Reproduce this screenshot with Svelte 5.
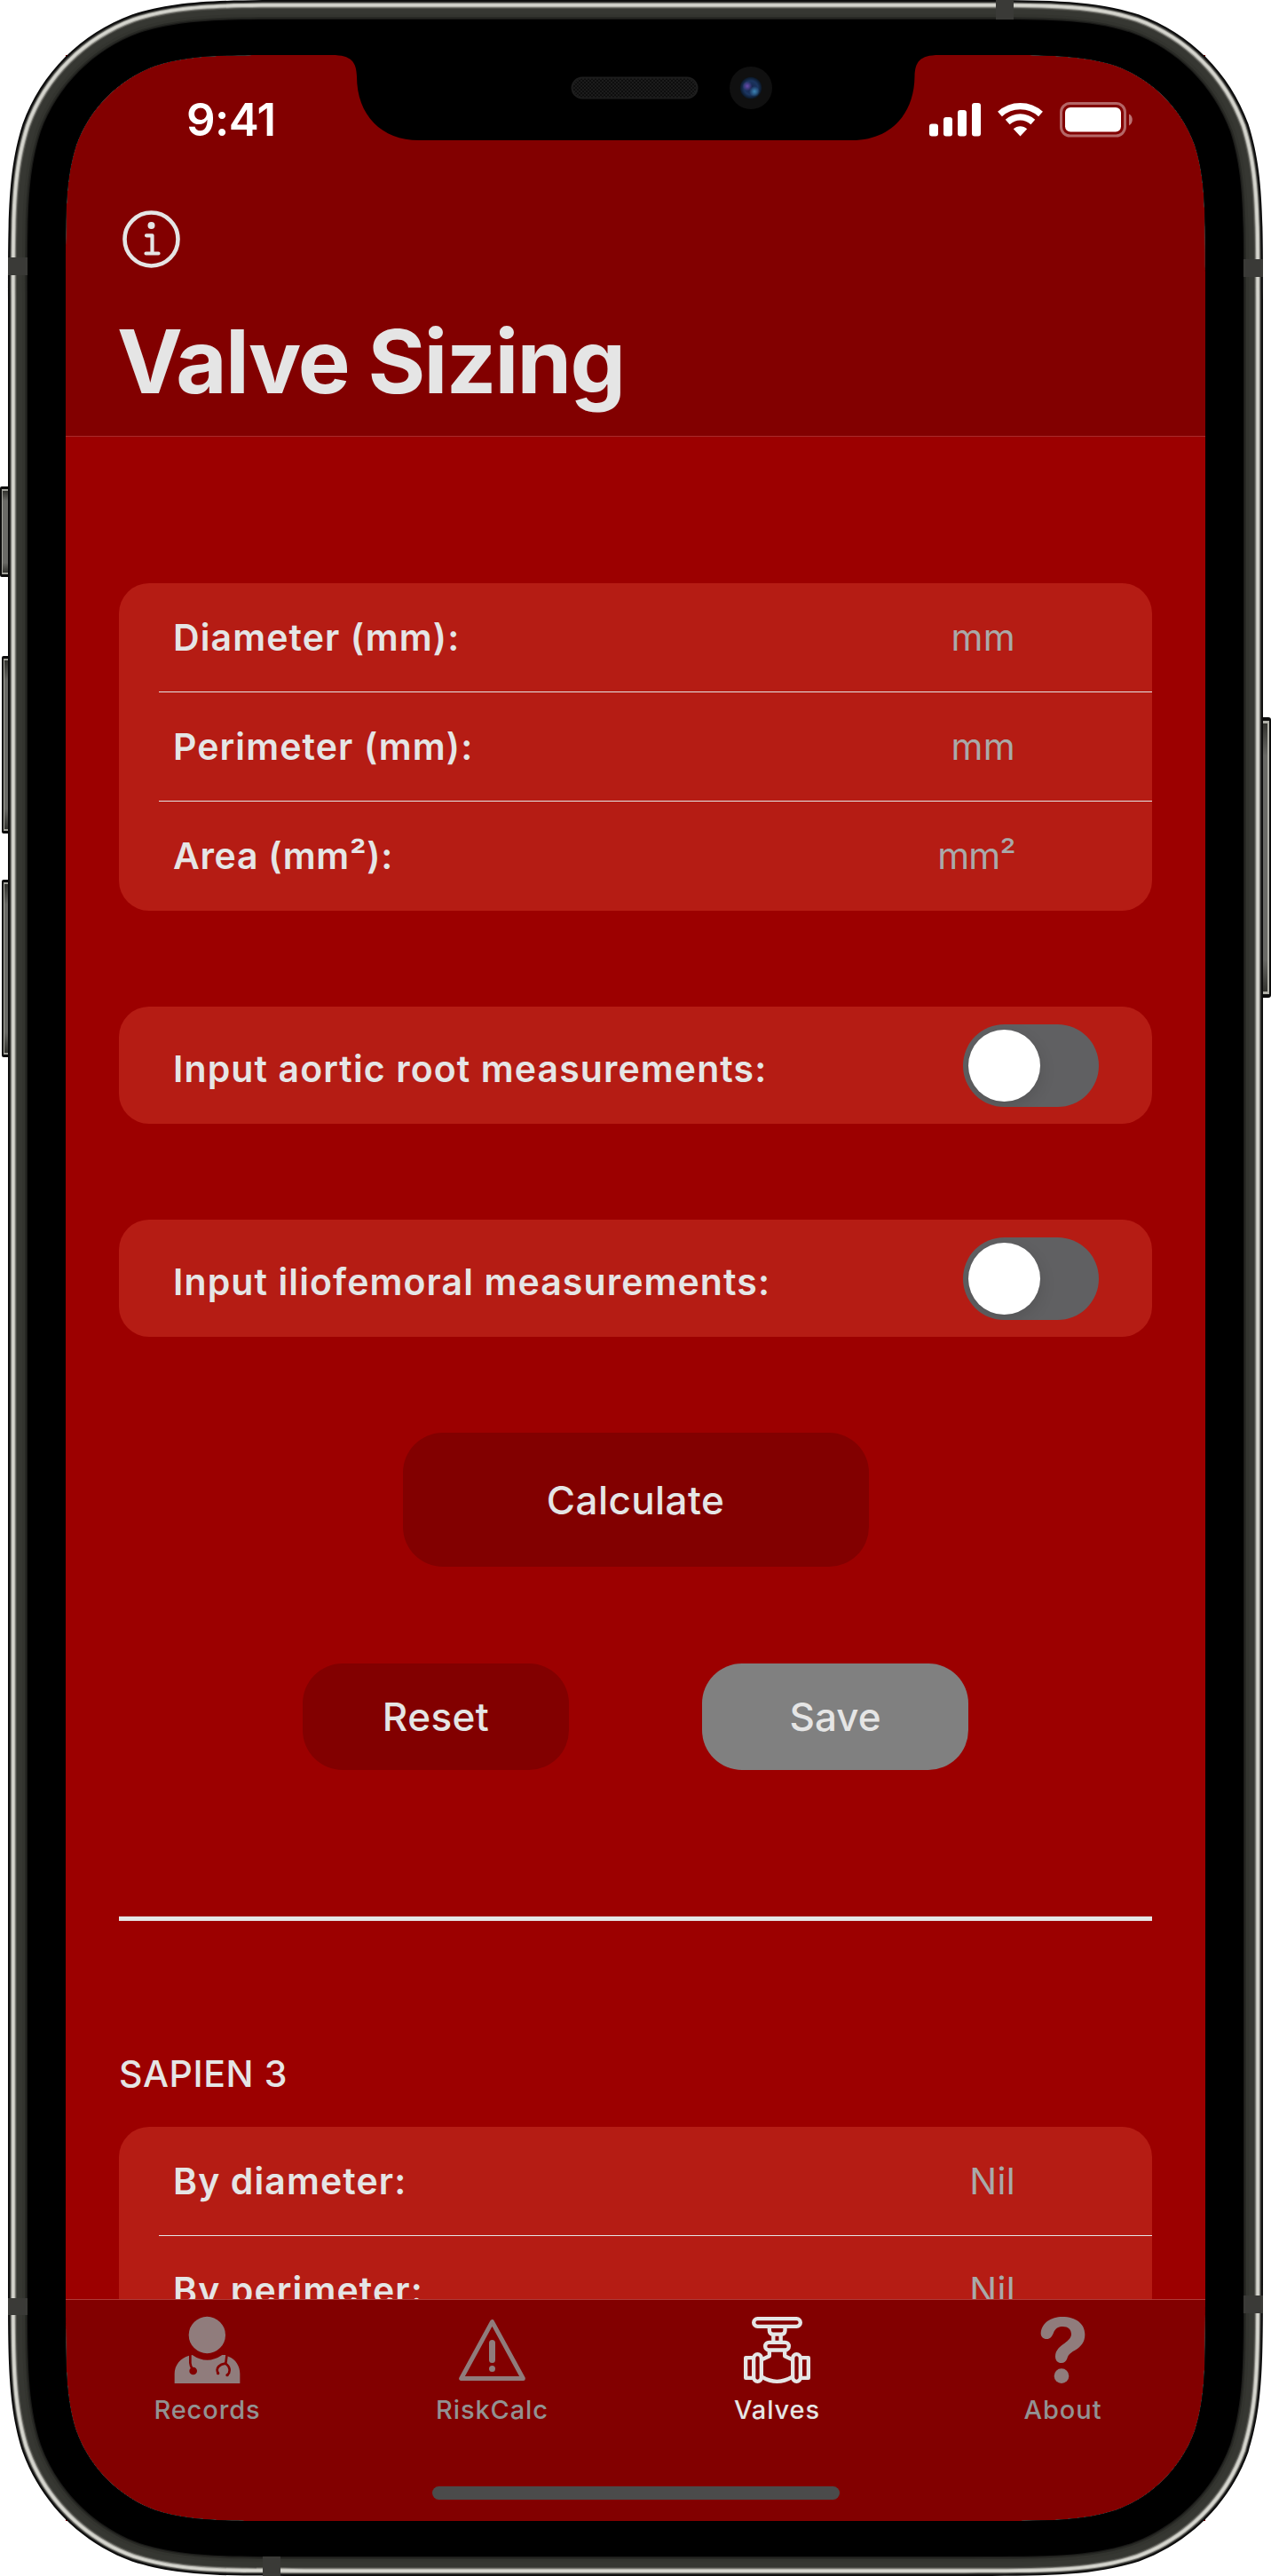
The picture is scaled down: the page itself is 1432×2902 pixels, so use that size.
<script>
  const measurements = [
    { label: 'Diameter (mm):', unit: 'mm' },
    { label: 'Perimeter (mm):', unit: 'mm' },
    { label: 'Area (mm²):', unit: 'mm²', squared: true },
  ];
  const results = [
    { label: 'By diameter:', value: 'Nil' },
    { label: 'By perimeter:', value: 'Nil' },
  ];

  let toggles = $state([
    { label: 'Input aortic root measurements:', on: false },
    { label: 'Input iliofemoral measurements:', on: false },
  ]);

  const tabs = [
    { name: 'Records', icon: 'doctor' },
    { name: 'RiskCalc', icon: 'warning' },
    { name: 'Valves', icon: 'valve' },
    { name: 'About', icon: 'question' },
  ];
  let active = $state('Valves');

  // Rounded rectangle with continuous-curvature corners.
  function squircle(x0, y0, x1, y1, r) {
    const a = 1.52866483 * r, b = 1.08849296 * r, c = 0.86840694 * r, d = 0.63149379 * r;
    const e = 0.37282383 * r, f = 0.16905956 * r, g = 0.07491139 * r;
    return [
      `M${x0 + a} ${y0}H${x1 - a}`,
      `C${x1 - b} ${y0} ${x1 - c} ${y0} ${x1 - d} ${y0 + g}`,
      `C${x1 - e} ${y0 + f} ${x1 - f} ${y0 + e} ${x1 - g} ${y0 + d}`,
      `C${x1} ${y0 + c} ${x1} ${y0 + b} ${x1} ${y0 + a}`,
      `V${y1 - a}`,
      `C${x1} ${y1 - b} ${x1} ${y1 - c} ${x1 - g} ${y1 - d}`,
      `C${x1 - f} ${y1 - e} ${x1 - e} ${y1 - f} ${x1 - d} ${y1 - g}`,
      `C${x1 - c} ${y1} ${x1 - b} ${y1} ${x1 - a} ${y1}`,
      `H${x0 + a}`,
      `C${x0 + b} ${y1} ${x0 + c} ${y1} ${x0 + d} ${y1 - g}`,
      `C${x0 + e} ${y1 - f} ${x0 + f} ${y1 - e} ${x0 + g} ${y1 - d}`,
      `C${x0} ${y1 - c} ${x0} ${y1 - b} ${x0} ${y1 - a}`,
      `V${y0 + a}`,
      `C${x0} ${y0 + b} ${x0} ${y0 + c} ${x0 + g} ${y0 + d}`,
      `C${x0 + f} ${y0 + e} ${x0 + e} ${y0 + f} ${x0 + d} ${y0 + g}`,
      `C${x0 + c} ${y0} ${x0 + b} ${y0} ${x0 + a} ${y0}Z`,
    ].join('');
  }

  const hole = squircle(74, 62, 1358, 2840, 160);
  // Metal band, from the outside inwards.
  const layers = [
    [0, '#0b0b0b'], [1.6, '#20201f'], [2.6, '#5b5b57'], [3.6, '#b4b4ad'], [4.6, '#d6d6cf'],
    [6.8, '#c4c4bd'], [7.8, '#84847e'], [8.8, '#4b4b46'], [10, '#363732'], [16, '#33342f'],
    [19, '#282925'], [20.8, '#1a1a18'], [22, '#000'],
  ].map(([inset, color]) => ({
    color,
    d: squircle(9 + inset, inset, 1423 - inset, 2902 - inset, 221 - inset * 0.95) + hole,
  }));
  const bands = [
    [9, 290, 22, 20], [9, 2589, 22, 19], [1401, 292, 22, 20], [1401, 2586, 22, 20],
    [1122, 0, 20, 22], [296, 2880, 20, 22],
  ];
  const sideKeys = [[0, 548, 102], [2, 739, 200], [2, 991, 200]];
</script>

<div class="device">
  <div class="screen">
    <header>
      <div class="status">
        <span class="time">9:41</span>
        <svg class="indicators" width="229" height="40" viewBox="0 0 229 40">
          <g fill="#fff">
            <rect x="0" y="24.5" width="10" height="14" rx="3" />
            <rect x="16" y="17" width="10" height="21.500" rx="3" />
            <rect x="32" y="9" width="10" height="29.500" rx="3" />
            <rect x="48" y="1" width="10" height="37.500" rx="3" />
          </g>
          <g fill="none" stroke="#fff" stroke-width="7.200">
            <path d="M79.500 13.500C92.500 1.600 112.500 1.600 125.500 13.500" />
            <path d="M88.200 22.500C96.500 15 108.500 15 116.800 22.500" />
          </g>
          <path fill="#fff" d="M102.500 38.500L94.800 30.300C99.200 26.300 105.800 26.300 110.200 30.300Z" />
          <rect x="148.500" y="1.500" width="72" height="36.500" rx="10" fill="none" stroke="#fff" stroke-opacity=".4" stroke-width="3" />
          <rect x="153" y="6" width="63" height="27.500" rx="6" fill="#fff" />
          <path fill="#fff" fill-opacity=".45" d="M225 13.500C230 15.500 230 24 225 26.500Z" />
        </svg>
      </div>
      <button class="info" aria-label="Information">
        <svg width="65" height="65" viewBox="0 0 65 65" fill="none" stroke="#e5e5e5">
          <circle cx="32.500" cy="32.500" r="30" stroke-width="4.600" />
          <path d="M27 28.300H33.500V48.500M26.500 48.500H40.500" stroke-width="4.200" stroke-linecap="round" stroke-linejoin="round" />
          <circle cx="32.500" cy="17" r="4" fill="#e5e5e5" stroke="none" />
        </svg>
      </button>
      <h1>Valve Sizing</h1>
    </header>

    <main>
      <section class="card">
        {#each measurements as m}
          <div class="row">
            <span class="label" class:squared={m.squared}>{m.label}</span>
            <span class="value" class:squared={m.squared}>{m.unit}</span>
          </div>
        {/each}
      </section>

      {#each toggles as t}
        <section class="card switch-row">
          <span class="label">{t.label}</span>
          <button class="switch" class:on={t.on} role="switch" aria-checked={t.on} aria-label={t.label} onclick={() => (t.on = !t.on)}>
            <i></i>
          </button>
        </section>
      {/each}

      <div class="actions">
        <button class="pill calculate">Calculate</button>
        <div class="pair">
          <button class="pill reset">Reset</button>
          <button class="pill save">Save</button>
        </div>
      </div>

      <div class="divider"></div>

      <h2>SAPIEN 3</h2>
      <section class="card">
        {#each results as r}
          <div class="row">
            <span class="label">{r.label}</span>
            <span class="value">{r.value}</span>
          </div>
        {/each}
        <div class="row"></div>
      </section>
    </main>

    <nav>
      <div class="tabs">
        {#each tabs as tab}
          <button class="tab" class:active={active === tab.name} onclick={() => (active = tab.name)}>
            <svg width="75" height="75" viewBox="0 0 225 225">
              {#if tab.icon === 'doctor'}
                <circle cx="112" cy="61.500" r="62" fill="currentColor" />
                <path fill="currentColor" d="M2 225V193C2 163 22 139 51 131L62 129Q112 164 163 129L175 129L184 134C208 143 223 165 223 193V225Z" />
                <g fill="none" stroke="#820000" stroke-width="8" stroke-linecap="round">
                  <path d="M55 126V156Q56 168 63 178" />
                  <path d="M179 126L175 157" />
                  <path d="M149 190C139 172 156 160 173 158C190 166 192 186 181 196" />
                </g>
                <g fill="#820000">
                  <circle cx="65" cy="183" r="13" />
                  <circle cx="149" cy="191" r="5" />
                  <circle cx="180" cy="197" r="5" />
                </g>
              {:else if tab.icon === 'warning'}
                <path fill="none" stroke="currentColor" stroke-width="15" stroke-linejoin="round" d="M112.500 17L8 208.500H217Z" />
                <rect x="102" y="78" width="21" height="78" rx="10.500" fill="currentColor" />
                <circle cx="112.500" cy="175.500" r="10.500" fill="currentColor" />
              {:else if tab.icon === 'valve'}
                <g fill="none" stroke="currentColor" stroke-width="13" stroke-linejoin="round">
                  <rect x="33.500" y="6.500" width="158" height="26" rx="13" />
                  <path d="M86.500 34V46Q87 59 99 59H127Q139 59 139.500 46V34" />
                  <path d="M100 60V84M125 60V84" />
                  <rect x="72.500" y="86.500" width="80" height="26" rx="13" />
                  <path d="M86.500 114V133L64 143M138.500 114V133L161 143" />
                  <rect x="33.500" y="126.500" width="26" height="92" rx="13" />
                  <rect x="165.500" y="126.500" width="26" height="92" rx="13" />
                  <path d="M33 138.500H6.500V206.500H33M192 138.500H218.500V206.500H192" />
                  <path d="M61 203Q112.500 234 164 203" />
                </g>
              {:else}
                <path fill="currentColor" d="M38 56C40 20 74 0 110 0C158 0 187 24 187 60C187 86 173 102 152 114C136 123 130 130 127 141C123 151 117 156 108 156C94 156 87 146 87 134C87 118 96 106 112 94C128 81 140 74 141 59C141 43 130 33 112 33C95 33 87 40 81 54C75 68 70 75 58 75C46 75 38 67 38 56Z" />
                <circle cx="108" cy="200" r="25" fill="currentColor" />
              {/if}
            </svg>
            <span>{tab.name}</span>
          </button>
        {/each}
      </div>
      <div class="home"></div>
    </nav>
  </div>

  <svg class="chassis" width="1432" height="2902" viewBox="0 0 1432 2902">
    <defs>
      <linearGradient id="key" x1="0" x2="0" y1="0" y2="1">
        <stop offset="0" stop-color="#33332f" />
        <stop offset=".12" stop-color="#6a6a66" />
        <stop offset=".88" stop-color="#6a6a66" />
        <stop offset="1" stop-color="#33332f" />
      </linearGradient>
      <pattern id="mesh" width="4" height="4" patternUnits="userSpaceOnUse">
        <rect width="4" height="4" fill="#0e0e0e" />
        <rect width="2" height="2" fill="#1c1c1c" />
        <rect x="2" y="2" width="2" height="2" fill="#1c1c1c" />
      </pattern>
      <radialGradient id="lens">
        <stop offset="0" stop-color="#16234c" />
        <stop offset=".65" stop-color="#1b3560" />
        <stop offset="1" stop-color="#0a1726" />
      </radialGradient>
      <radialGradient id="violet">
        <stop offset="0" stop-color="#6a4bab" />
        <stop offset="1" stop-color="#6a4bab" stop-opacity="0" />
      </radialGradient>
      <radialGradient id="cyan">
        <stop offset="0" stop-color="#3b84b4" />
        <stop offset="1" stop-color="#3b84b4" stop-opacity="0" />
      </radialGradient>
    </defs>

    {#each sideKeys as [x, y, h]}
      <rect {x} {y} width="14" height={h} rx="2" fill="#0c0c0c" />
      <rect x={x + 2} y={y + 3} width="12" height={h - 6} fill="#a3a39c" />
      <rect x={x + 3} y={y + 5} width="12" height={h - 10} fill="url(#key)" />
    {/each}
    <rect x="1418" y="808" width="14" height="316" rx="3" fill="#0c0c0c" />
    <rect x="1418" y="812" width="12" height="308" fill="#b0b0a8" />
    <rect x="1418" y="815" width="10" height="302" fill="url(#key)" />

    {#each layers as layer}
      <path d={layer.d} fill={layer.color} fill-rule="evenodd" />
    {/each}
    {#each bands as [x, y, width, height]}
      <rect {x} {y} {width} {height} fill="#3a3a37" />
    {/each}

    <path d="M374 61V62C396 62 401.500 70 402 86C402 130 430 158 472 158H960C1002 158 1030 130 1030.500 86C1031 70 1036 62 1058 62V61Z" />
    <rect x="644.500" y="87.500" width="141" height="23" rx="11.500" fill="url(#mesh)" stroke="#1d1d1d" stroke-width="2" />
    <circle cx="846" cy="99" r="24" fill="#101010" />
    <circle cx="846" cy="99" r="12.200" fill="url(#lens)" />
    <circle cx="842" cy="97" r="5.500" fill="url(#violet)" />
    <circle cx="850" cy="103" r="6" fill="url(#cyan)" />
  </svg>
</div>

<style>
  :global(body) {
    margin: 0;
    background: #fff;
  }
  .device {
    display: grid;
    width: 1432px;
    height: 2902px;
    overflow: hidden;
    font-family: Inter, 'Liberation Sans', sans-serif;
    color: #e5e5e5;
  }
  .screen,
  .chassis {
    grid-area: 1 / 1;
  }
  .chassis {
    display: block;
    pointer-events: none;
    z-index: 1;
  }
  .screen {
    display: flex;
    flex-direction: column;
    width: 1284px;
    height: 2778px;
    margin: 62px 74px;
    background: #9c0000;
  }
  button {
    border: 0;
    padding: 0;
    background: none;
    font: inherit;
    color: inherit;
  }
  header {
    box-sizing: border-box;
    height: 430px;
    padding-top: 48px;
    background: #820000;
    border-bottom: 1px solid #a82a2a;
  }
  .status {
    display: flex;
    justify-content: space-between;
    align-items: center;
    height: 50px;
    padding: 0 82px 0 136px;
  }
  .time {
    font-size: 51px;
    font-weight: 600;
    line-height: 50px;
    letter-spacing: -0.6px;
    color: #fff;
  }
  .info {
    display: block;
    width: 65px;
    height: 65px;
    margin: 77px 0 0 64px;
  }
  .info svg {
    display: block;
  }
  h1 {
    margin: 45px 0 0 58px;
    font-size: 99px;
    font-weight: 700;
    line-height: 120px;
    letter-spacing: -1.8px;
  }
  main {
    flex: 1;
    min-height: 0;
    overflow: hidden;
    padding: 165px 60px 0;
  }
  .card {
    background: #b51c14;
    border-radius: 34px;
    overflow: hidden;
  }
  .row {
    position: relative;
    display: flex;
    justify-content: space-between;
    align-items: center;
    box-sizing: border-box;
    height: 123px;
    padding: 0 154px 2px 61px;
  }
  .row:not(:last-child)::after {
    content: '';
    position: absolute;
    left: 45px;
    right: 0;
    bottom: 0;
    height: 1px;
    background: #e5e5e5;
  }
  .label {
    font-size: 41px;
    font-weight: 600;
    line-height: 50px;
    letter-spacing: 1.1px;
  }
  .label.squared {
    letter-spacing: 0.7px;
  }
  .value {
    font-size: 41px;
    line-height: 50px;
    letter-spacing: 0.3px;
    color: #a9a9a9;
  }
  .value.squared {
    letter-spacing: -0.7px;
  }
  .switch-row {
    display: flex;
    justify-content: space-between;
    align-items: center;
    height: 132px;
    margin-top: 108px;
    padding: 0 60px 0 61px;
  }
  .switch-row .label {
    padding-top: 8px;
  }
  .switch {
    display: flex;
    align-items: center;
    box-sizing: border-box;
    width: 153px;
    height: 93px;
    padding: 0 6px;
    border-radius: 47px;
    background: #606062;
  }
  .switch i {
    width: 81px;
    height: 81px;
    border-radius: 50%;
    background: #fff;
    box-shadow: 0 6px 18px rgba(0, 0, 0, 0.12);
  }
  .switch {
    overflow: hidden;
  }
  .switch.on {
    justify-content: flex-end;
    background: #34c759;
  }
  .actions {
    display: flex;
    flex-direction: column;
    align-items: center;
    gap: 109px;
    margin-top: 108px;
  }
  .pill {
    height: 120px;
    width: 300px;
    border-radius: 45px;
    background: #820000;
    font-size: 44px;
    font-weight: 500;
    letter-spacing: 0.4px;
  }
  .calculate {
    width: 525px;
    height: 151px;
  }
  .pill.save {
    background: #808080;
    letter-spacing: 0;
  }
  .pair {
    display: flex;
    gap: 150px;
  }
  .divider {
    height: 5px;
    margin-top: 165px;
    background: #e5e5e5;
  }
  h2 {
    margin: 147px 0 35px;
    font-size: 41px;
    font-weight: 500;
    line-height: 50px;
    letter-spacing: 0.6px;
  }
  nav {
    box-sizing: border-box;
    height: 250px;
    background: #820000;
    border-top: 1px solid #b03a38;
  }
  .tabs {
    display: grid;
    grid-template-columns: repeat(4, 1fr);
    height: 210px;
  }
  .tab {
    display: flex;
    flex-direction: column;
    align-items: center;
    padding: 19px 2px 0 0;
    color: #907c7c;
  }
  .tab:last-child {
    padding-right: 0;
  }
  .tab svg {
    display: block;
    overflow: visible;
  }
  .tab span {
    margin-top: 12px;
    font-size: 29px;
    font-weight: 500;
    line-height: 36px;
    letter-spacing: 0.9px;
    color: #929292;
  }
  .tab.active,
  .tab.active span {
    color: #e5e5e5;
  }
  .home {
    width: 459px;
    height: 15px;
    margin: 0 auto;
    border-radius: 8px;
    background: #4b4b4b;
  }
</style>
